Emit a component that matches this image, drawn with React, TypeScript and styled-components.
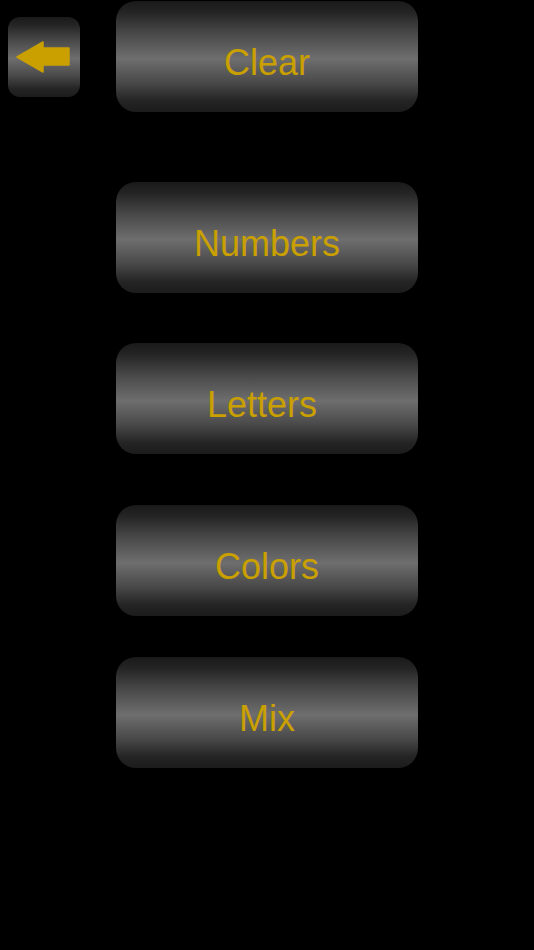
import styled, { createGlobalStyle } from "styled-components";

const GlobalStyle = createGlobalStyle`
  html, body {
    margin: 0;
    padding: 0;
    background: #000;
  }
  body {
    font-family: "Liberation Sans", Arial, sans-serif;
  }
`;

const Screen = styled.div`
  width: 534px;
  height: 950px;
  background: #000;
  display: flex;
  align-items: flex-start;
  padding-left: 8px;
  box-sizing: border-box;
`;

const shine = `linear-gradient(
  to bottom,
  #1a1a1a 0%,
  #242424 10%,
  #4a4a4a 30%,
  #6e6e6e 52%,
  #4a4a4a 73%,
  #242424 90%,
  #1c1c1c 100%
)`;

const BackButton = styled.button`
  margin-top: 17px;
  width: 72px;
  height: 80px;
  border: none;
  padding: 0;
  border-radius: 12px;
  background: ${shine};
  display: flex;
  align-items: center;
  justify-content: center;
  cursor: pointer;
`;

const Menu = styled.div`
  margin-left: 36px;
  padding-top: 1px;
  display: flex;
  flex-direction: column;
`;

const MenuButton = styled.button<{ $gap: number; $shift?: number }>`
  margin-top: ${(p) => p.$gap}px;
  width: 302px;
  height: 111px;
  border: none;
  border-radius: 20px;
  background: ${shine};
  color: #c9a000;
  font-family: "Liberation Sans", Arial, sans-serif;
  font-size: 36px;
  padding: 13px ${(p) => p.$shift ?? 0}px 0 0;
  cursor: pointer;
`;

const items = [
  { label: "Clear", gap: 0 },
  { label: "Numbers", gap: 70 },
  { label: "Letters", gap: 50, shift: 10 },
  { label: "Colors", gap: 51 },
  { label: "Mix", gap: 41 },
];

export default function App() {
  return (
    <>
      <GlobalStyle />
      <Screen>
        <BackButton aria-label="Back">
          <svg width="72" height="80" viewBox="0 0 72 80">
            <path
              d="M9 40 L35 25 L35 31 L61 31 L61 48 L35 48 L35 55 Z"
              fill="#c9a000"
              stroke="#c9a000"
              strokeWidth="1.5"
              strokeLinejoin="round"
            />
          </svg>
        </BackButton>
        <Menu>
          {items.map((it) => (
            <MenuButton key={it.label} $gap={it.gap} $shift={it.shift}>
              {it.label}
            </MenuButton>
          ))}
        </Menu>
      </Screen>
    </>
  );
}
